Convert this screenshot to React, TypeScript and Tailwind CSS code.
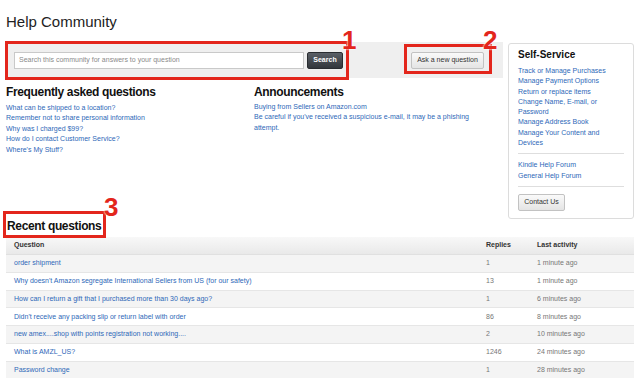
import React from "react";

const font = { fontFamily: '"Liberation Sans", Arial, Helvetica, sans-serif' };

const faq = [
  "What can be shipped to a location?",
  "Remember not to share personal information",
  "Why was I charged $99?",
  "How do I contact Customer Service?",
  "Where's My Stuff?",
];

const selfService1 = [
  "Track or Manage Purchases",
  "Manage Payment Options",
  "Return or replace items",
  "Change Name, E-mail, or Password",
  "Manage Address Book",
  "Manage Your Content and Devices",
];

const rows = [
  ["order shipment", "1", "1 minute ago"],
  ["Why doesn't Amazon segregate International Sellers from US (for our safety)", "13", "1 minute ago"],
  ["How can I return a gift that I purchased more than 30 days ago?", "1", "6 minutes ago"],
  ["Didn't receive any packing slip or return label with order", "86", "8 minutes ago"],
  ["new amex....shop with points registration not working....", "2", "10 minutes ago"],
  ["What is AMZL_US?", "1246", "24 minutes ago"],
  ["Password change", "1", "28 minutes ago"],
];

function Num({ n }: { n: string }) {
  return (
    <span
      className="absolute text-[26px] font-bold leading-none text-[#e3261c]"
      style={{ textShadow: "0 0 2px #fff, 0 0 2px #fff" }}
    >
      {n}
    </span>
  );
}

export default function App() {
  return (
    <div className="relative w-[640px] h-[378px] overflow-hidden bg-white pl-[6px] pr-[6px]" style={font}>
      <div className="pt-[12px] text-[15px] leading-[20px] text-[#222]">Help Community</div>

      <div className="mt-[10px] flex gap-[5px]">
        <div className="w-[497px]">
          <div className="flex h-[36px] items-center bg-[#efefef] px-[8px]">
            <div className="flex h-[17px] w-[290px] items-center border border-[#c9c9c9] bg-white pl-[4px] text-[7px] text-[#8a8a8a]">
              Search this community for answers to your question
            </div>
            <div className="ml-[3px] flex h-[17px] w-[36px] items-center justify-center rounded-[2px] border border-[#2a2d31] bg-gradient-to-b from-[#5b6067] to-[#33373c] text-[7px] font-bold text-white">
              Search
            </div>
            <div className="ml-[68px] flex h-[17px] w-[73px] items-center justify-center rounded-[2px] border border-[#c2c2c2] bg-gradient-to-b from-[#fafafa] to-[#e4e4e4] text-[7px] text-[#333]">
              Ask a new question
            </div>
          </div>

          <div className="mt-[7px] flex">
            <div className="w-[248px]">
              <div className="text-[12px] font-bold leading-[14px] tracking-[-0.35px] text-[#111]">Frequently asked questions</div>
              <div className="mt-[3.5px] flex flex-col">
                {faq.map((t) => (
                  <div key={t} className="text-[7px] leading-[10.5px] text-[#2e68b8]">{t}</div>
                ))}
              </div>
            </div>
            <div className="w-[226px]">
              <div className="text-[12px] font-bold leading-[14px] tracking-[-0.35px] text-[#111]">Announcements</div>
              <div className="mt-[2.5px] flex flex-col">
                <div className="text-[7px] leading-[10.5px] text-[#2e68b8]">Buying from Sellers on Amazon.com</div>
                <div className="text-[7px] leading-[10.5px] text-[#2e68b8]">
                  Be careful if you've received a suspicious e-mail, it may be a phishing attempt.
                </div>
              </div>
            </div>
          </div>
        </div>

        <div className="mt-[1px] h-[176px] w-[126px] rounded-[3px] border border-[#dcdcdc] px-[9px] pt-[5px]">
          <div className="text-[10px] font-bold leading-[12px] text-[#111]">Self-Service</div>
          <div className="mt-[5px] flex flex-col pr-[8px]">
            {selfService1.map((t) => (
              <div key={t} className="text-[7px] leading-[10.3px] text-[#2e68b8]">{t}</div>
            ))}
          </div>
          <div className="mt-[5px] border-t border-[#dedede]" />
          <div className="mt-[6px] flex flex-col">
            <div className="text-[7px] leading-[10.3px] text-[#2e68b8]">Kindle Help Forum</div>
            <div className="text-[7px] leading-[10.3px] text-[#2e68b8]">General Help Forum</div>
          </div>
          <div className="mt-[5px] border-t border-[#dedede]" />
          <div className="mt-[7px] flex h-[17px] w-[47px] items-center justify-center rounded-[2px] border border-[#c2c2c2] bg-gradient-to-b from-[#fafafa] to-[#e4e4e4] text-[7px] text-[#333]">
            Contact Us
          </div>
        </div>
      </div>

      <div className="mt-[0px] pl-[1px] text-[12px] font-bold leading-[14px] tracking-[-0.35px] text-[#111]">Recent questions</div>

      <div className="mt-[4px] w-[628px]">
        <div className="flex h-[18px] items-center border-b border-[#e0e0e0] bg-gradient-to-b from-[#f8f8f8] to-[#e9e9e9] text-[7px] font-bold text-[#333]">
          <div className="w-[480px] pl-[8px]">Question</div>
          <div className="w-[51px]">Replies</div>
          <div className="flex-1">Last activity</div>
        </div>
        {rows.map((r, i) => (
          <div
            key={i}
            className={
              "flex h-[17.8px] items-center border-b border-[#e6e6e6] text-[7px] " +
              (i % 2 === 0 ? "bg-[#f4f4f4]" : "bg-white")
            }
          >
            <div className="w-[480px] pl-[8px] text-[#2e68b8]">{r[0]}</div>
            <div className="w-[51px] text-[#777]">{r[1]}</div>
            <div className="flex-1 text-[#777]">{r[2]}</div>
          </div>
        ))}
      </div>

      {/* annotations */}
      <div className="absolute left-[5px] top-[41px] h-[39px] w-[344px] border-[3px] border-[#e3261c]" />
      <div className="absolute left-[342px] top-[27px]"><Num n="1" /></div>
      <div className="absolute left-[404px] top-[44px] h-[30px] w-[88px] border-[3px] border-[#e3261c]" />
      <div className="absolute left-[483px] top-[27px]"><Num n="2" /></div>
      <div className="absolute left-[3px] top-[211px] h-[27px] w-[103px] border-[3px] border-[#e3261c]" />
      <div className="absolute left-[104px] top-[194px]"><Num n="3" /></div>
    </div>
  );
}
